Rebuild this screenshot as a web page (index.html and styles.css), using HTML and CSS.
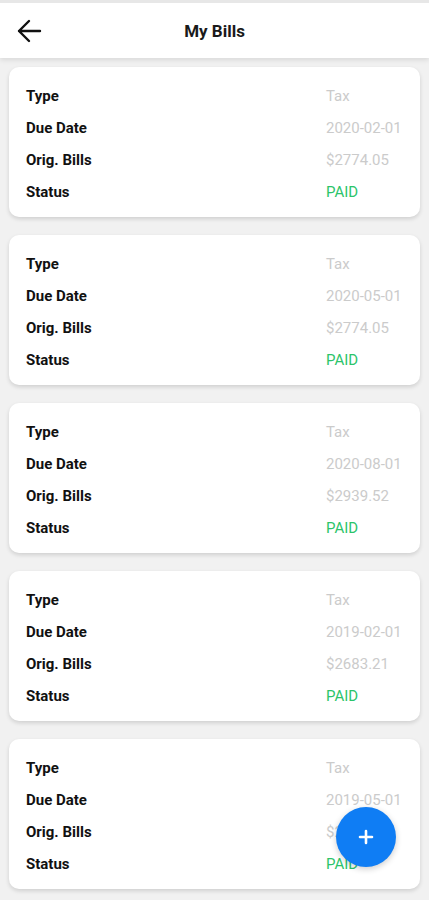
FILE: index.html
```html
<!DOCTYPE html>
<html lang="en">
<head>
  <meta charset="UTF-8" />
  <meta name="viewport" content="width=device-width, initial-scale=1.0"/>
  <title>My Bills</title>
  <link rel="stylesheet" href="styles.css">
</head>
<body>
  <header class="topbar">
    <button class="back" aria-label="Back">
      <svg width="26" height="26" viewBox="0 0 26 26" fill="none" stroke="#111" stroke-width="2.4" stroke-linecap="round" stroke-linejoin="round">
        <path d="M24 13H3M13 3L3 13l10 10"/>
      </svg>
    </button>
    <h1>My Bills</h1>
    <span></span>
  </header>

  <main class="bills">
    <section class="bill">
      <div class="row"><span class="label">Type</span><span class="value">Tax</span></div>
      <div class="row"><span class="label">Due Date</span><span class="value">2020-02-01</span></div>
      <div class="row"><span class="label">Orig. Bills</span><span class="value">$2774.05</span></div>
      <div class="row"><span class="label">Status</span><span class="value paid">PAID</span></div>
    </section>
    <section class="bill">
      <div class="row"><span class="label">Type</span><span class="value">Tax</span></div>
      <div class="row"><span class="label">Due Date</span><span class="value">2020-05-01</span></div>
      <div class="row"><span class="label">Orig. Bills</span><span class="value">$2774.05</span></div>
      <div class="row"><span class="label">Status</span><span class="value paid">PAID</span></div>
    </section>
    <section class="bill">
      <div class="row"><span class="label">Type</span><span class="value">Tax</span></div>
      <div class="row"><span class="label">Due Date</span><span class="value">2020-08-01</span></div>
      <div class="row"><span class="label">Orig. Bills</span><span class="value">$2939.52</span></div>
      <div class="row"><span class="label">Status</span><span class="value paid">PAID</span></div>
    </section>
    <section class="bill">
      <div class="row"><span class="label">Type</span><span class="value">Tax</span></div>
      <div class="row"><span class="label">Due Date</span><span class="value">2019-02-01</span></div>
      <div class="row"><span class="label">Orig. Bills</span><span class="value">$2683.21</span></div>
      <div class="row"><span class="label">Status</span><span class="value paid">PAID</span></div>
    </section>
    <section class="bill">
      <div class="row"><span class="label">Type</span><span class="value">Tax</span></div>
      <div class="row"><span class="label">Due Date</span><span class="value">2019-05-01</span></div>
      <div class="row"><span class="label">Orig. Bills</span><span class="value">$2683.21</span></div>
      <div class="row"><span class="label">Status</span><span class="value paid">PAID</span></div>
    </section>
  </main>

  <button class="fab" aria-label="Add bill">
    <svg width="16" height="16" viewBox="0 0 16 16" stroke="#fff" stroke-width="2.6" stroke-linecap="round">
      <path d="M8 2v12M2 8h12"/>
    </svg>
  </button>
</body>
</html>
```

FILE: styles.css
```css
body {
  font-family: Roboto, 'Noto Sans', sans-serif;
  margin: 0;
  padding: 0;
  background: #f1f1f1;
  color: #111;
  overflow: hidden;
}

.topbar {
  display: grid;
  grid-template-columns: 1fr auto 1fr;
  align-items: center;
  height: 55px;
  border-top: 3px solid #e7e7e7;
  background: white;
  box-shadow: 0 2px 5px rgba(0, 0, 0, 0.1);
}

.back {
  justify-self: start;
  display: flex;
  margin-left: 16px;
  padding: 0;
  border: none;
  background: none;
}

.topbar h1 {
  margin: 0;
  font-size: 17px;
  font-weight: 700;
  color: #1a1a1a;
}

.bills {
  display: flex;
  flex-direction: column;
  gap: 18px;
  padding: 9px 9px;
}

.bill {
  height: 150px;
  box-sizing: border-box;
  padding: 13px 0 9px;
  background: white;
  border-radius: 10px;
  box-shadow: 0 2px 4px rgba(0, 0, 0, 0.14);
}

.row {
  display: grid;
  grid-template-columns: 300px 1fr;
  align-items: center;
  height: 32px;
  padding-left: 17px;
  font-size: 15px;
}

.label {
  font-weight: 700;
  color: #111;
}

.value {
  color: #cbcbcb;
}

.value.paid {
  color: #2cc46a;
}

.fab {
  position: fixed;
  right: 33px;
  bottom: 33px;
  width: 60px;
  height: 60px;
  display: flex;
  align-items: center;
  justify-content: center;
  border: none;
  border-radius: 50%;
  background: #0f7df4;
  box-shadow: 0 2px 6px rgba(0, 0, 0, 0.2);
}
```
